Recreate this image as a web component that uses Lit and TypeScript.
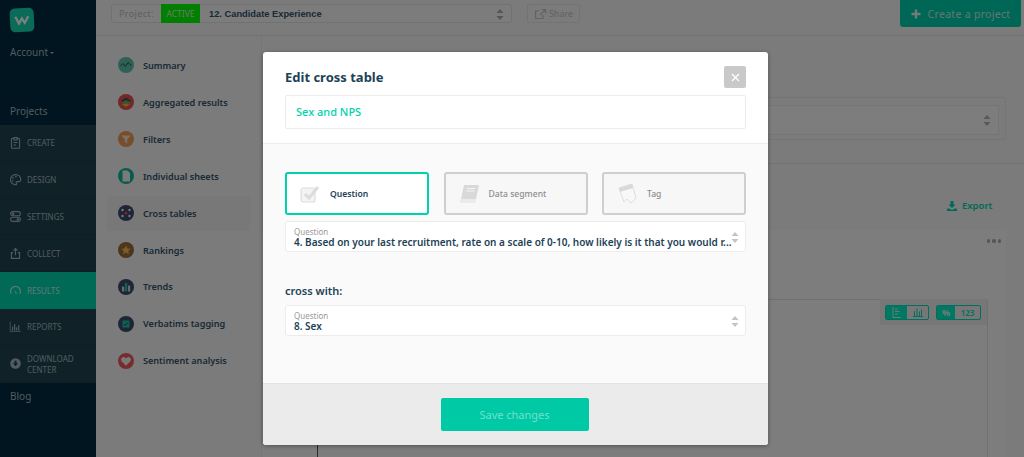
import { LitElement, html, css, svg } from "lit";
import { customElement } from "lit/decorators.js";

const navIcons: Record<string, unknown> = {
  create: svg`<path d="M4 3h2V2h4v1h2a1 1 0 0 1 1 1v10a1 1 0 0 1-1 1H4a1 1 0 0 1-1-1V4a1 1 0 0 1 1-1zM6 2v3h4V2M5.500 8h5M5.500 11h3" fill="none" stroke="currentColor" stroke-width="1.300"/>`,
  design: svg`<path d="M8 2a6.200 6.200 0 0 0 0 12.400c1.500 0 1.500-1 1-1.800-.6-1 0-2 1.200-2H12c1.500 0 2.400-1 2.400-2.600C14.400 4.500 11.600 2 8 2z" fill="none" stroke="currentColor" stroke-width="1.300"/><circle cx="5" cy="6" r="1" fill="currentColor"/><circle cx="4.500" cy="9.500" r="1" fill="currentColor"/><circle cx="8.500" cy="4.500" r="1" fill="currentColor"/>`,
  settings: svg`<rect x="2" y="2" width="12" height="5" rx="2.500" fill="none" stroke="currentColor" stroke-width="1.300"/><rect x="2" y="9" width="12" height="5" rx="2.500" fill="none" stroke="currentColor" stroke-width="1.300"/><circle cx="5" cy="4.500" r="1.500" fill="currentColor"/><circle cx="11" cy="11.500" r="1.500" fill="currentColor"/>`,
  collect: svg`<path d="M8 10V2M5.500 4.500 8 2l2.500 2.500M5 7H3v7h10V7h-2" fill="none" stroke="currentColor" stroke-width="1.400"/>`,
  results: svg`<path d="M2.500 12a6.200 6.200 0 1 1 11 0" fill="none" stroke="currentColor" stroke-width="1.500"/><path d="M6.500 7l3.500 4-1.500 1.500z" fill="currentColor"/>`,
  reports: svg`<path d="M1.500 2v12h13" fill="none" stroke="currentColor" stroke-width=".9"/><path d="M4.500 8v5M7 5v8M9.500 9v4M12 6.500V13" stroke="currentColor" stroke-width="1.400"/>`,
  download: svg`<circle cx="8" cy="8" r="6.500" fill="currentColor"/><path d="M6.700 4.500h2.600v3.200h2L8 11.500 4.700 7.700h2z" fill="#20434f"/>`,
};

const menuIcons: Record<string, unknown> = {
  summary: svg`<circle cx="8" cy="8" r="8" fill="#5cc2a6"/><path d="M2.500 9 5 6.500 7.500 9.500 10 5.500 13.500 8.500" fill="none" stroke="#33495a" stroke-width="1"/>`,
  aggregated: svg`<circle cx="8" cy="8" r="8" fill="#e35050"/><path d="M8 3.500 13 7 8 10 3 7z" fill="#3c4a6c"/><path d="M3 8.500 8 11.500 13 8.500 8 6z" fill="#7cb342" opacity=".9"/><path d="M4 10.500 8 13 12 10.500 8 9.500z" fill="#f2b33d"/>`,
  filters: svg`<circle cx="8" cy="8" r="8" fill="#ee9c55"/><path d="M3.500 4.500h9L9.200 8.500v4l-2.400-1.500V8.500z" fill="#f7e5cf"/>`,
  sheets: svg`<circle cx="8" cy="8" r="8" fill="#0fb896"/><path d="M4.500 2.500h5L12 5v8.500H4.500z" fill="#f4f4f4"/>`,
  cross: svg`<circle cx="8" cy="8" r="8" fill="#3c4a6c"/><circle cx="8" cy="8" r="1.500" fill="#e35050"/><circle cx="4.500" cy="5" r="1.200" fill="#f2f2f2"/><circle cx="11.500" cy="5" r="1.200" fill="#f2f2f2"/><circle cx="4.500" cy="11" r="1.200" fill="#f2f2f2"/><circle cx="11.500" cy="11" r="1.200" fill="#f2f2f2"/>`,
  rankings: svg`<circle cx="8" cy="8" r="8" fill="#9c6a3a"/><path d="m8 3.500 1.400 3 3.200.3-2.400 2.200.8 3.200L8 10.500l-3 1.700.8-3.200-2.400-2.200 3.200-.3z" fill="#f5c04e"/>`,
  trends: svg`<circle cx="8" cy="8" r="8" fill="#3c4a6c"/><rect x="4" y="7.500" width="2.200" height="5" fill="#c8d4dc"/><rect x="7" y="4" width="2.200" height="8.500" fill="#2cc09c"/><rect x="10" y="6.500" width="2.200" height="6" fill="#c8d4dc"/>`,
  verbatims: svg`<circle cx="8" cy="8" r="8" fill="#3c4a6c"/><rect x="4.500" y="4.500" width="7" height="7" fill="#1dc29c"/><path d="m6 8 1.500 1.500L10 6.500" fill="none" stroke="#2c3f50" stroke-width="1"/>`,
  sentiment: svg`<circle cx="8" cy="8" r="8" fill="#ec5a60"/><path d="M8 12.800 3.600 8.300a2.600 2.600 0 0 1 3.700-3.600l.7.700.7-.7a2.600 2.600 0 0 1 3.700 3.600z" fill="#f7f0f0"/>`,
};

const nav = [
  ["create", "CREATE"],
  ["design", "DESIGN"],
  ["settings", "SETTINGS"],
  ["collect", "COLLECT"],
  ["results", "RESULTS"],
  ["reports", "REPORTS"],
  ["download", "DOWNLOAD CENTER"],
];
const menu = [
  ["summary", "Summary"],
  ["aggregated", "Aggregated results"],
  ["filters", "Filters"],
  ["sheets", "Individual sheets"],
  ["cross", "Cross tables"],
  ["rankings", "Rankings"],
  ["trends", "Trends"],
  ["verbatims", "Verbatims tagging"],
  ["sentiment", "Sentiment analysis"],
];

const arrows = html`<svg class="arrows" width="8" height="13" viewBox="0 0 8 13"><path d="M4 1 7.500 5H.5zM4 12 .5 8h7z"/></svg>`;

@customElement("app-root")
export class AppRoot extends LitElement {
  static styles = css`
    :host { display: block; position: relative; width: 1024px; height: 457px; overflow: hidden; font-family: "Noto Sans", "Open Sans", sans-serif; }
    .page { display: flex; height: 457px; background: #f6f6f6; }
    .side { width: 96px; flex: none; background: #002b41; color: #a4b6be; display: flex; flex-direction: column; }
    .logo { margin: 8px 0 0 10px; width: 24px; height: 24px; border-radius: 5px; background: #14d8b0; display: flex; align-items: center; justify-content: center; transform: rotate(-3deg); }
    .account { font-size: 10px; line-height: 14px; margin: 13px 0 0 10px; height: 53px; }
    .caret { display: inline-block; border: 2.500px solid transparent; border-top-color: currentColor; border-bottom: 0; vertical-align: 2px; margin-left: 2px; }
    .projects { font-size: 10px; line-height: 14px; margin: 0 0 0 10px; padding: 6px 0 7px; }
    .nav { background: #20434f; }
    .nav-item { height: 36.800px; display: flex; align-items: center; gap: 5px; padding-left: 9px; font-size: 8px; line-height: 11px; color: #a4b8c0; border-bottom: 1px solid #1d3d49; box-sizing: border-box; }
    .nav-item svg { flex: none; }
    .nav-item.on { background: #00d4ae; color: #c4f0e6; border-bottom: 0; }
    .nav-item span { width: 56px; }
    .blog { font-size: 10px; line-height: 14px; margin: 6px 0 0 10px; }

    .main { flex: 1; min-width: 0; display: flex; flex-direction: column; }
    .top { height: 36px; flex: none; display: flex; align-items: flex-start; box-sizing: border-box; border-bottom: 1px solid #e2e2e2; padding: 4px 3px 0 15px; }
    .proj { width: 401px; height: 19px; display: flex; align-items: stretch; border: 1px solid #e3e3e3; border-radius: 3px; box-sizing: border-box; background: #f9f9f9; font-size: 9px; }
    .proj-label { width: 49px; flex: none; color: #bdbdbd; text-align: center; line-height: 17px; letter-spacing: .4px; }
    .active { width: 39px; flex: none; background: #00ff00; color: #d8f4d8; font-size: 8.500px; text-align: center; line-height: 19px; margin-top: -1px; height: 19px; }
    .proj-name { flex: 1; font: bold 9.300px/18px "Liberation Sans", Arial, sans-serif; color: #33546b; padding-left: 9px; }
    .proj .arrows { margin: 3px 7px 0 0; fill: #aaa; }
    .share { margin-left: 15px; width: 53px; height: 19px; box-sizing: border-box; border: 1px solid #e6e6e6; border-radius: 2px; display: flex; align-items: center; justify-content: center; gap: 2px; color: #c4c4c4; font-size: 9px; }
    .create { margin-left: auto; margin-top: -4px; width: 121px; height: 27px; background: #00ccaa; border-radius: 0 0 3px 3px; color: #c4f0e6; display: flex; align-items: center; justify-content: center; gap: 7px; font-size: 10.500px; letter-spacing: .3px; }
    .create svg { flex: none; }

    .body { flex: 1; display: flex; min-height: 0; }
    .menu { width: 166px; flex: none; box-sizing: border-box; border-right: 1px solid #ededed; padding: 11px 11px 0; }
    .menu-item { height: 36.900px; display: flex; align-items: center; gap: 9px; padding-left: 11px; border-radius: 3px; font-size: 9.100px; font-weight: 600; color: #33546b; box-sizing: border-box; }
    .menu-item.on { background: #f0f0f0; height: 35px; margin: 1px 0; }
    .content { flex: 1; position: relative; }
    .sel-outer { position: absolute; left: 200px; right: 18px; top: 61px; height: 43px; border: 1px solid #e8e8e8; border-radius: 3px; box-sizing: border-box; }
    .sel-inner { position: absolute; left: 0; right: 6px; top: 7px; height: 30px; border: 1px solid #ebebeb; border-radius: 2px; box-sizing: border-box; background: #fafafa; display: flex; justify-content: flex-end; align-items: center; padding-right: 7px; }
    .sel-inner .arrows { fill: #b0b0b0; }
    .rule { position: absolute; left: 0; right: 0; top: 127px; border-top: 1px solid #e5e5e5; }
    .export { position: absolute; left: 685px; top: 163px; display: flex; align-items: center; gap: 5px; color: #00d4ae; font-size: 9.500px; font-weight: 600; line-height: 14px; }
    .card { position: absolute; left: 0; right: 18px; top: 194px; bottom: 0; background: #fbfbfb; border-radius: 3px; }
    .dots { position: absolute; right: 5px; top: 9px; display: flex; gap: 2px; }
    .dots i { width: 3.500px; height: 3.500px; border-radius: 50%; background: #aaa; }
    .inner { position: absolute; left: 55px; right: 18px; top: 69px; bottom: 0; border-top: 1px solid #e3e3e3; border-right: 1px solid #e3e3e3; border-left: 1px solid #555; }
    .toggles { position: absolute; right: 0; top: -1px; display: flex; gap: 7px; padding: 6px 6px 5px 5px; background: #eeeeee; border-radius: 0 0 0 3px; }
    .tg { display: flex; height: 15px; border: 1px solid #00e0b8; border-radius: 2px; box-sizing: border-box; overflow: hidden; font-size: 8px; line-height: 13px; color: #00e0b8; font-weight: 600; }
    .tg > div { display: flex; align-items: center; justify-content: center; }
    .tg .f { background: #00f0c8; color: #e4faf5; font-weight: 700; font-size: 9px; }
    .tg .w21 { width: 21px; }
    .tg .w18 { width: 18px; }
    .tg .w25 { width: 25px; }

    .overlay { position: absolute; inset: 0; background: rgba(0, 0, 0, .5); }
    .modal { position: absolute; left: 263px; top: 52px; width: 505px; height: 393px; border-radius: 3px; background: #fff; display: flex; flex-direction: column; overflow: hidden; box-shadow: 0 1px 4px rgba(0, 0, 0, .35); }
    .m-head { height: 92px; flex: none; box-sizing: border-box; padding: 15px 22px 0; border-bottom: 1px solid #ececec; position: relative; }
    .m-title { font-size: 13px; line-height: 20px; font-weight: 700; color: #1d4256; }
    .close { position: absolute; right: 22px; top: 14px; width: 22px; height: 22px; border-radius: 2px; background: #c9c9c9; display: flex; align-items: center; justify-content: center; }
    .name { margin-top: 8px; height: 34px; box-sizing: border-box; border: 1px solid #ececec; border-radius: 2px; padding-left: 10px; font-size: 11px; line-height: 32px; font-weight: 500; color: #00d2ab; }
    .m-body { flex: 1; background: #fafafa; padding: 28px 22px 0; }
    .tabs { display: flex; gap: 14.500px; }
    .tab { flex: 1; height: 43px; box-sizing: border-box; border: 2px solid #cfcfcf; border-radius: 3px; display: flex; align-items: center; font-size: 8.600px; color: #8e8e8e; font-weight: 500; background: #f7f7f7; }
    .tab.on { border-color: #00d2ab; background: #fff; color: #1d4256; font-weight: 600; }
    .tab svg { margin-left: 13px; width: 22px; margin-right: 8px; flex: none; }
    .field { height: 31px; box-sizing: border-box; margin-top: 6px; background: #fff; border: 1px solid #ececec; border-radius: 3px; padding: 5px 8px 0; position: relative; }
    .f-label { font-size: 8px; line-height: 9px; color: #9a9a9a; }
    .f-val { font-size: 10px; line-height: 12px; font-weight: 600; color: #1d4256; white-space: nowrap; }
    .field .arrows { position: absolute; right: 6px; top: 9px; fill: #c4c4c4; }
    .cross { font-size: 11px; line-height: 15px; font-weight: 600; color: #1d4256; margin-top: 31px; }
    .field.two { margin-top: 7px; }
    .m-foot { height: 62px; flex: none; box-sizing: border-box; background: #ebebeb; border-top: 1px solid #e3e3e3; display: flex; align-items: center; justify-content: center; padding-right: 2px; }
    .save { width: 148px; height: 33px; border-radius: 2px; background: #00c9a5; color: #74dfcb; font-size: 11px; text-align: center; line-height: 33px; }
  `;

  render() {
    return html`
      <div class="page">
        <div class="side">
          <div class="logo"><svg width="16" height="10" viewBox="0 0 16 10"><path d="M1.500 1.500 4.800 8.500 8 3.500 10.500 8 14.500 1.500" fill="none" stroke="#fff" stroke-width="2.200"/></svg></div>
          <div class="account">Account<span class="caret"></span></div>
          <div class="projects">Projects</div>
          <div class="nav">
            ${nav.map(([k, l]) => html`
              <div class="nav-item ${k === "results" ? "on" : ""}">
                <svg width="13" height="13" viewBox="0 0 16 16">${navIcons[k]}</svg><span>${l}</span>
              </div>`)}
          </div>
          <div class="blog">Blog</div>
        </div>
        <div class="main">
          <div class="top">
            <div class="proj">
              <div class="proj-label">Project:</div>
              <div class="active">ACTIVE</div>
              <div class="proj-name">12. Candidate Experience</div>
              ${arrows}
            </div>
            <div class="share">
              <svg width="13" height="12" viewBox="0 0 13 12"><path d="M9 7v3.500H1.500V3H5M6 7l5-5M7.500 1.500h4v4" fill="none" stroke="#c4c4c4" stroke-width="1.200"/></svg>Share
            </div>
            <div class="create">
              <svg width="10" height="10" viewBox="0 0 10 10"><path d="M5 .5v9M.5 5h9" stroke="#e4faf5" stroke-width="2.400"/></svg>Create a project
            </div>
          </div>
          <div class="body">
            <div class="menu">
              ${menu.map(([k, l]) => html`
                <div class="menu-item ${k === "cross" ? "on" : ""}">
                  <svg width="16" height="16" viewBox="0 0 16 16">${menuIcons[k]}</svg>${l}
                </div>`)}
            </div>
            <div class="content">
              <div class="sel-outer"><div class="sel-inner">${arrows}</div></div>
              <div class="rule"></div>
              <div class="export">
                <svg width="10" height="10" viewBox="0 0 10 10"><path d="M3.500 0h3v3.500h2L5 7 1.500 3.500h2zM0 7.500h2L5 9l3-1.500h2V10H0z" fill="#00d4ae"/></svg>Export
              </div>
              <div class="card">
                <div class="dots"><i></i><i></i><i></i></div>
                <div class="inner">
                  <div class="toggles">
                    <div class="tg">
                      <div class="f w21"><svg width="9" height="11" viewBox="0 0 9 11"><path d="M1 0v10.500h8M3 2h3M3 4.500h4.500M3 7h3" fill="none" stroke="#e4faf5" stroke-width=".9"/></svg></div>
                      <div class="w21"><svg width="10" height="9" viewBox="0 0 10 9"><path d="M0 8.500h10M1.500 3v5M4 .5V8M6.500 3.500V8M8.500 1.500V8" stroke="#00e0b8" stroke-width="1"/></svg></div>
                    </div>
                    <div class="tg">
                      <div class="f w18">%</div>
                      <div class="w25">123</div>
                    </div>
                  </div>
                </div>
              </div>
            </div>
          </div>
        </div>
      </div>
      <div class="overlay"></div>
      <div class="modal">
        <div class="m-head">
          <div class="m-title">Edit cross table</div>
          <div class="close"><svg width="9" height="9" viewBox="0 0 9 9"><path d="M1 1l7 7M8 1 1 8" stroke="#fff" stroke-width="1.300"/></svg></div>
          <div class="name">Sex and NPS</div>
        </div>
        <div class="m-body">
          <div class="tabs">
            <div class="tab on">
              <svg height="18" viewBox="0 0 22 18"><rect x="1" y="3" width="14" height="14" rx="2" fill="#f3f3f3" stroke="#dedede" stroke-width="1.200"/><path d="M5 9l4 4 9-11" fill="none" stroke="#dcdcdc" stroke-width="3"/></svg>Question
            </div>
            <div class="tab">
              <svg height="20" viewBox="0 0 22 20"><path d="M5 1h15l-3 14H2z" fill="#d9d9d9"/><path d="M2 15h15l-.6 4H3a2 2 0 0 1-1-4z" fill="#ebebeb"/><path d="M8 4.500h8M7.500 7h8" stroke="#f5f5f5" stroke-width="1.200"/></svg>Data segment
            </div>
            <div class="tab">
              <svg height="22" viewBox="0 0 22 22"><path d="M2 5 15 1l4 14-5 5-4-4-3 3z" fill="#f8f8f8" stroke="#dedede" stroke-width="1"/><path d="M2 5 15 1l1 4L3 9z" fill="#d9d9d9"/></svg>Tag
            </div>
          </div>
          <div class="field">
            <div class="f-label">Question</div>
            <div class="f-val">4. Based on your last recruitment, rate on a scale of 0-10, how likely is it that you would r...</div>
            ${arrows}
          </div>
          <div class="cross">cross with:</div>
          <div class="field two">
            <div class="f-label">Question</div>
            <div class="f-val">8. Sex</div>
            ${arrows}
          </div>
        </div>
        <div class="m-foot"><div class="save">Save changes</div></div>
      </div>
    `;
  }
}
